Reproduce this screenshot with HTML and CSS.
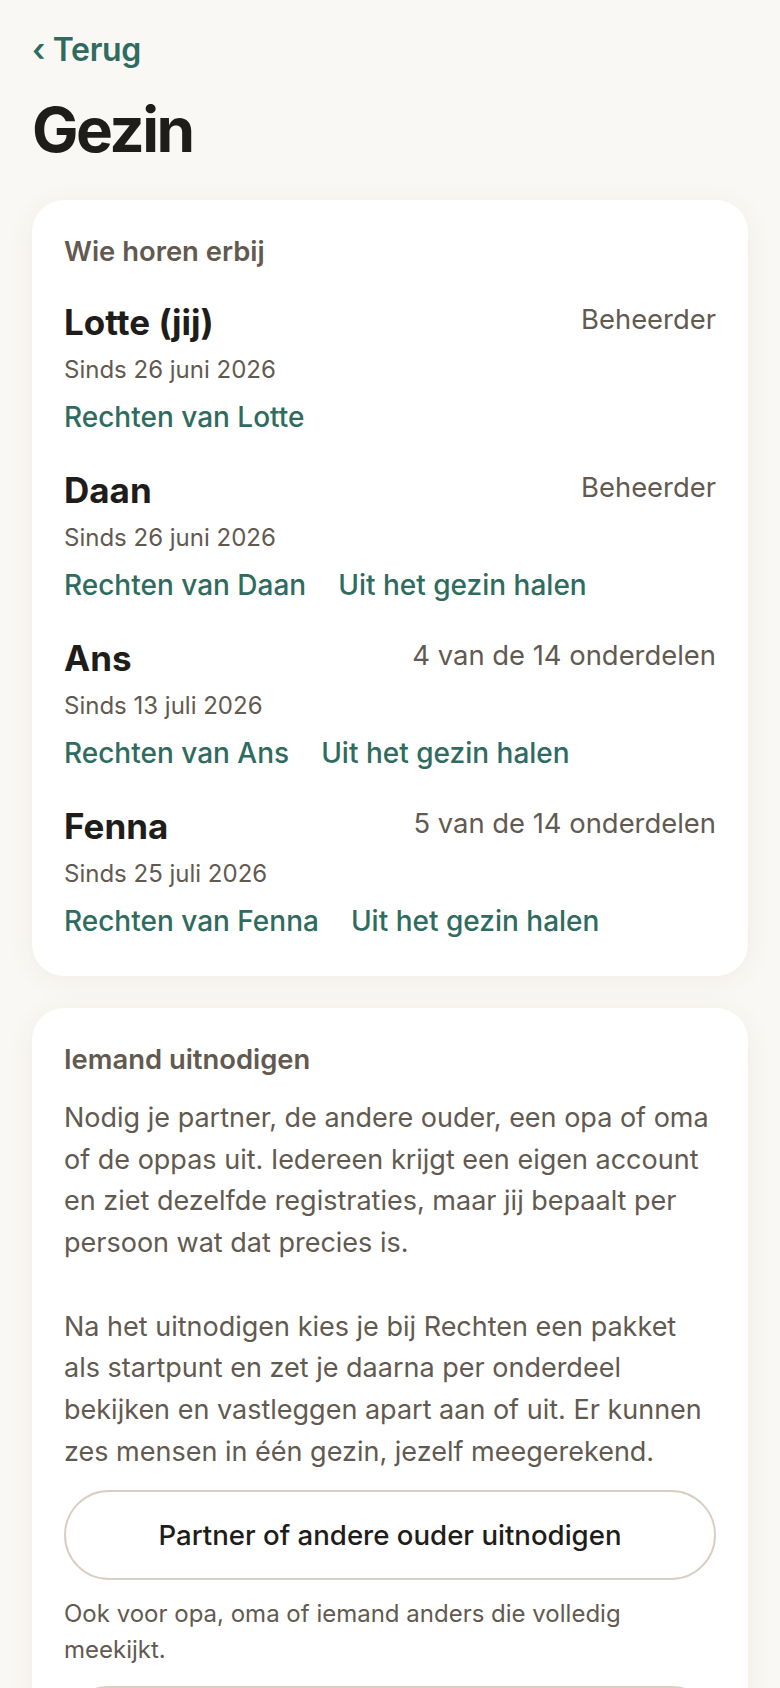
FILE: index.html
```html
<!DOCTYPE html>
<html lang="nl">
<head>
<meta charset="utf-8">
<title>Gezin</title>
<link rel="stylesheet" href="styles.css">
</head>
<body>
<main class="page">
  <a class="back" href="#">‹ Terug</a>
  <h1 class="title">Gezin</h1>

  <section class="card">
    <h2 class="card-heading">Wie horen erbij</h2>
    <ul class="members">
      <li class="member">
        <div class="member-top"><span class="member-name">Lotte (jij)</span><span class="member-role">Beheerder</span></div>
        <div class="member-since">Sinds 26 juni 2026</div>
        <div class="member-actions"><a href="#">Rechten van Lotte</a></div>
      </li>
      <li class="member">
        <div class="member-top"><span class="member-name">Daan</span><span class="member-role">Beheerder</span></div>
        <div class="member-since">Sinds 26 juni 2026</div>
        <div class="member-actions"><a href="#">Rechten van Daan</a><a href="#">Uit het gezin halen</a></div>
      </li>
      <li class="member">
        <div class="member-top"><span class="member-name">Ans</span><span class="member-role">4 van de 14 onderdelen</span></div>
        <div class="member-since">Sinds 13 juli 2026</div>
        <div class="member-actions"><a href="#">Rechten van Ans</a><a href="#">Uit het gezin halen</a></div>
      </li>
      <li class="member">
        <div class="member-top"><span class="member-name">Fenna</span><span class="member-role">5 van de 14 onderdelen</span></div>
        <div class="member-since">Sinds 25 juli 2026</div>
        <div class="member-actions"><a href="#">Rechten van Fenna</a><a href="#">Uit het gezin halen</a></div>
      </li>
    </ul>
  </section>

  <section class="card invite">
    <h2 class="card-heading">Iemand uitnodigen</h2>
    <p class="invite-text">Nodig je partner, de andere ouder, een opa of oma of de oppas uit. Iedereen krijgt een eigen account en ziet dezelfde registraties, maar jij bepaalt per persoon wat dat precies is.</p>
    <p class="invite-text">Na het uitnodigen kies je bij Rechten een pakket als startpunt en zet je daarna per onderdeel bekijken en vastleggen apart aan of uit. Er kunnen zes mensen in één gezin, jezelf meegerekend.</p>
    <button class="pill-btn" type="button">Partner of andere ouder uitnodigen</button>
    <p class="hint">Ook voor opa, oma of iemand anders die volledig meekijkt.</p>
    <button class="pill-btn" type="button" aria-label="Iemand anders uitnodigen"></button>
  </section>
</main>
</body>
</html>
```

FILE: styles.css
```css
* {
  box-sizing: border-box;
}

html, body {
  margin: 0;
  padding: 0;
  background: #faf8f4;
}

body {
  font-family: Inter, "Noto Sans", "Liberation Sans", sans-serif;
  color: #1e1d1a;
}

.page {
  padding: 30px 32px 40px;
  display: flex;
  flex-direction: column;
}

.back {
  display: block;
  font-size: 32px;
  line-height: 40px;
  font-weight: 600;
  color: #2f6b5e;
  text-decoration: none;
  letter-spacing: -0.01em;
}

.title {
  margin: 26px 0 36px;
  font-size: 62px;
  line-height: 68px;
  font-weight: 700;
  letter-spacing: -0.04em;
  color: #1e1d1a;
}

.card {
  background: #ffffff;
  border-radius: 32px;
  padding: 32px 32px 35px;
  box-shadow: 0 4px 28px rgba(90, 75, 50, 0.06);
}

.card + .card {
  margin-top: 32px;
}

.card-heading {
  margin: 0;
  font-size: 27.4px;
  line-height: 38px;
  font-weight: 600;
  color: #625a50;
}

.members {
  list-style: none;
  margin: 32px 0 0;
  padding: 0;
  display: flex;
  flex-direction: column;
  gap: 33px;
}

.member {
  display: flex;
  flex-direction: column;
}

.member-top {
  display: flex;
  justify-content: space-between;
  align-items: flex-start;
  gap: 16px;
}

.member-name {
  font-size: 35px;
  line-height: 40px;
  font-weight: 700;
  color: #1e1d1a;
}

.member-role {
  font-size: 27.4px;
  line-height: 35px;
  color: #625a50;
}

.member-since {
  margin-top: 11px;
  font-size: 24px;
  line-height: 34px;
  color: #625a50;
}

.member-actions {
  margin-top: 10px;
  display: flex;
  gap: 32px;
}

.member-actions a {
  font-size: 28px;
  line-height: 40px;
  font-weight: 500;
  color: #2f6b5e;
  text-decoration: none;
}

.invite-text {
  margin: 19px 0 0;
  font-size: 27px;
  line-height: 41.7px;
  color: #625a50;
}

.invite-text + .invite-text {
  margin-top: 41.7px;
}

.pill-btn {
  display: flex;
  align-items: center;
  justify-content: center;
  width: 100%;
  height: 90px;
  margin-top: 18px;
  border: 2px solid #d8cfc2;
  border-radius: 999px;
  background: #ffffff;
  font-family: inherit;
  font-size: 27.6px;
  font-weight: 500;
  color: #1e1d1a;
}

.hint {
  margin: 16px 0 0;
  max-width: 600px;
  font-size: 24px;
  line-height: 36px;
  color: #625a50;
}

.hint + .pill-btn {
  margin-top: 18px;
}
```
